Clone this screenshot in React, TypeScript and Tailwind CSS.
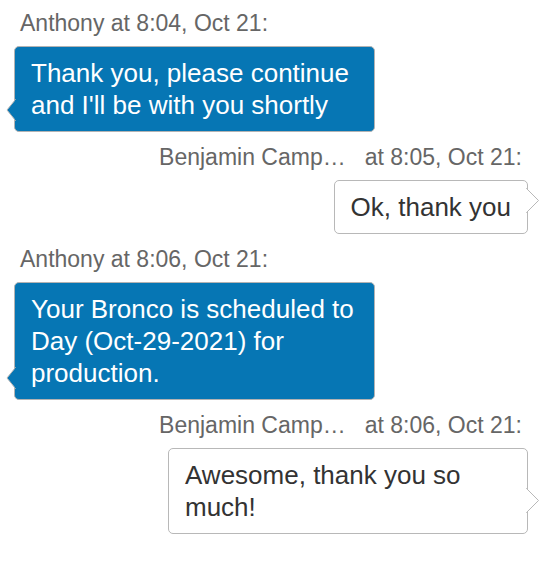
import React from "react";

const font = { fontFamily: '"Liberation Sans", Arial, sans-serif' };

function LeftMsg({ time, text }: { time: string; text: string }) {
  return (
    <div className="flex flex-col items-start">
      <div className="pl-[20px] text-[23px] leading-[26px] text-[#666666]">Anthony at {time}</div>
      <div className="relative ml-[14px] mt-[10px] max-w-[361px] rounded-[5px] border border-[#b3b3b3] bg-[#0676b4] px-[16px] py-[10px] text-[26px] leading-[32px] text-white">
        {text}
        <svg className="absolute bottom-[10px] left-[-10px]" width="11" height="22" viewBox="0 0 11 22">
          <polygon points="10.5,0.5 2,11 10.5,21.5" fill="#0676b4" stroke="#b3b3b3" strokeWidth="1" />
          <rect x="10" y="1" width="2" height="20" fill="#0676b4" />
        </svg>
      </div>
    </div>
  );
}

function RightMsg({ time, text }: { time: string; text: string }) {
  return (
    <div className="flex flex-col items-end">
      <div className="flex pr-[24px] text-[23px] leading-[26px] text-[#666666]">
        <span>Benjamin Camp…</span>
        <span className="ml-[19px]">at {time}</span>
      </div>
      <div className="relative mr-[18px] mt-[10px] max-w-[360px] rounded-[5px] border border-[#b8b8b8] bg-white px-[16px] py-[10px] text-[26px] leading-[32px] text-[#333333]">
        {text}
        <svg className="absolute bottom-[20px] right-[-13px]" width="14" height="25" viewBox="0 0 14 25">
          <polygon points="0.5,0.5 12.5,12.5 0.5,24.5" fill="#ffffff" stroke="#b8b8b8" strokeWidth="1" />
          <rect x="-1" y="1" width="2" height="23" fill="#ffffff" />
        </svg>
      </div>
    </div>
  );
}

export default function App() {
  return (
    <div className="flex w-[546px] min-h-[580px] flex-col gap-[12px] bg-white pt-[10px]" style={font}>
      <LeftMsg time="8:04, Oct 21:" text="Thank you, please continue and I'll be with you shortly" />
      <RightMsg time="8:05, Oct 21:" text="Ok, thank you" />
      <LeftMsg time="8:06, Oct 21:" text="Your Bronco is scheduled to Day (Oct-29-2021) for production." />
      <RightMsg time="8:06, Oct 21:" text="Awesome, thank you so much!" />
    </div>
  );
}
